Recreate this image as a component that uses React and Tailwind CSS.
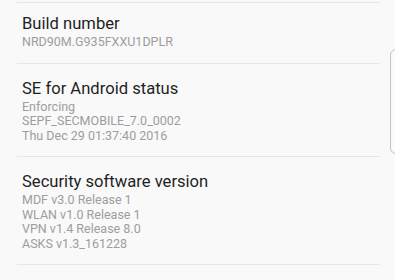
import React from 'react';

const items = [
  { title: 'Build number', lines: ['NRD90M.G935FXXU1DPLR'], first: true },
  {
    title: 'SE for Android status',
    lines: ['Enforcing', 'SEPF_SECMOBILE_7.0_0002', 'Thu Dec 29 01:37:40 2016'],
  },
  {
    title: 'Security software version',
    lines: ['MDF v3.0 Release 1', 'WLAN v1.0 Release 1', 'VPN v1.4 Release 8.0', 'ASKS v1.3_161228'],
  },
];

const App = () => {
  return (
    <div
      className="relative w-[395px] h-[280px] overflow-hidden bg-[#f9f9f9]"
      style={{ fontFamily: 'Roboto, "Noto Sans", sans-serif' }}
    >
      {/* tail of the previous row */}
      <div className="h-[2px]" />
      {items.map((item, i) => (
        <div key={i}>
          <div className="ml-[17px] mr-[15px] h-px bg-[#e6e6e6]" />
          <div className={`pl-[22px] pb-[13px] ${item.first ? 'pt-[10px]' : 'pt-[14px]'}`}>
            <div className="text-[16.6px] leading-[22px] text-[#1f1f1f]">{item.title}</div>
            {item.lines.map((line, j) => (
              <div key={j} className="text-[12.5px] leading-[14.5px] text-[#9d9d9d]">
                {line}
              </div>
            ))}
          </div>
        </div>
      ))}
      <div className="ml-[17px] mr-[15px] h-px bg-[#e6e6e6]" />

      {/* scroll handle on the right edge */}
      <div className="absolute left-[390px] top-[49px] w-[12px] h-[105px] rounded-l-[6px] border border-[#c4c4c4] bg-[#fafafa]" />
    </div>
  );
};

export default App;
